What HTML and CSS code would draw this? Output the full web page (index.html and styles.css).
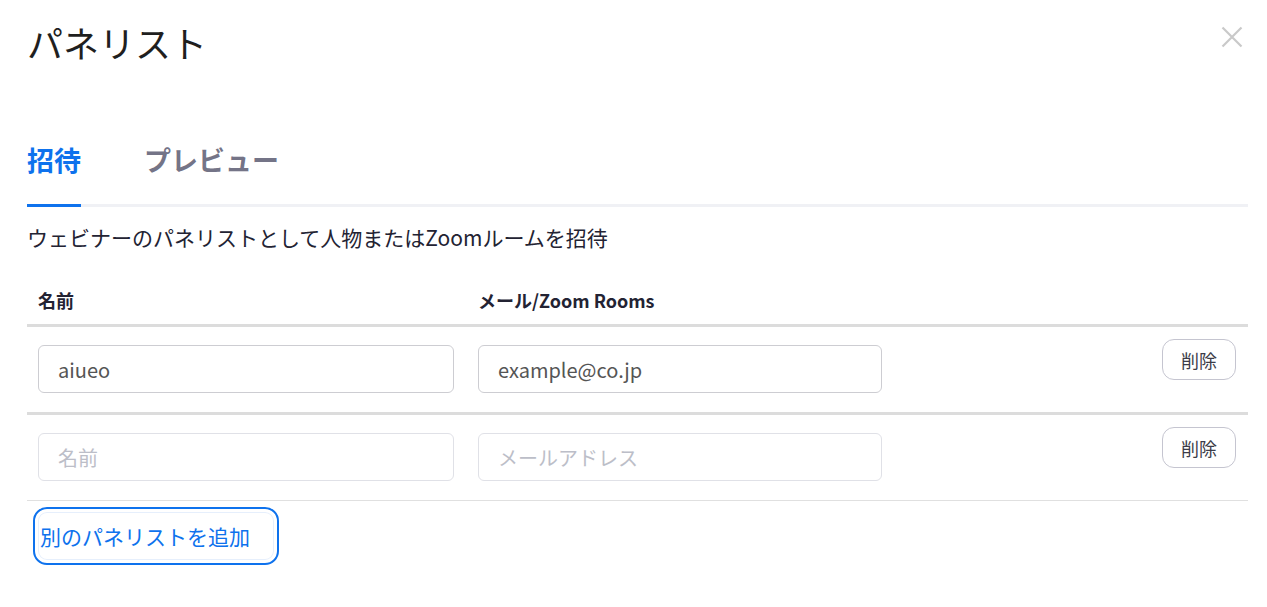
FILE: index.html
```
<!DOCTYPE html>
<html lang="ja">
<head>
<meta charset="utf-8">
<title>パネリスト</title>
<link rel="stylesheet" href="styles.css">
</head>
<body>
<div class="dialog">
  <div class="dialog-header">
    <h1 class="title">パネリスト</h1>
    <button class="close" aria-label="閉じる">
      <svg width="22" height="22" viewBox="0 0 22 22"><path d="M1.5 1.5 L20.5 20.5 M20.5 1.5 L1.5 20.5" stroke="#c9c9c9" stroke-width="2.2" stroke-linecap="butt" fill="none"/></svg>
    </button>
  </div>
  <div class="tabs">
    <div class="tab active">招待</div>
    <div class="tab">プレビュー</div>
  </div>
  <p class="desc">ウェビナーのパネリストとして人物またはZoomルームを招待</p>
  <div class="table">
    <div class="row head">
      <div class="cell">名前</div>
      <div class="cell">メール/Zoom Rooms</div>
      <div class="cell"></div>
    </div>
    <div class="row body thick">
      <div class="cell in"><input class="field name" type="text" value="aiueo" placeholder="名前"></div>
      <div class="cell in"><input class="field mail" type="text" value="example@co.jp" placeholder="メールアドレス"></div>
      <div class="cell act"><button class="del">削除</button></div>
    </div>
    <div class="row body thin">
      <div class="cell in"><input class="field name light" type="text" placeholder="名前"></div>
      <div class="cell in"><input class="field mail light" type="text" placeholder="メールアドレス"></div>
      <div class="cell act"><button class="del">削除</button></div>
    </div>
  </div>
  <button class="add">別のパネリストを追加</button>
</div>
</body>
</html>
```
FILE: styles.css
```
* { box-sizing: border-box; }
html, body { margin: 0; padding: 0; background: #fff; }
body {
  font-family: "Noto Sans CJK JP", "Noto Sans", sans-serif;
  color: #232333;
}
.dialog {
  width: 1267px;
  padding: 0 19px 0 27px;
}
.dialog-header {
  display: flex;
  justify-content: space-between;
  align-items: flex-start;
}
.title {
  margin: 21px 0 0 0;
  font-size: 36px;
  line-height: 43px;
  font-weight: 400;
  color: #1f1f1f;
}
.close {
  margin: 26px 5px 0 0;
  padding: 0;
  border: 0;
  background: none;
  width: 22px;
  height: 22px;
  display: block;
}
.close svg { display: block; }
.tabs {
  margin-top: 78px;
  display: flex;
  gap: 63px;
  border-bottom: 3px solid #f0f1f5;
}
.tab {
  font-size: 27px;
  line-height: 36px;
  font-weight: 700;
  color: #747487;
  padding-bottom: 26px;
}
.tab.active {
  color: #0e72ed;
  border-bottom: 3px solid #0e72ed;
  margin-bottom: -3px;
}
.desc {
  margin: 14px 0 0 0;
  font-size: 21px;
  line-height: 32px;
  color: #232333;
}
.table { margin-top: 27px; }
.row {
  display: grid;
  grid-template-columns: 440px 440px 1fr;
}
.cell { padding: 0 11px; }
.head {
  padding: 7px 0 11px;
  font-size: 18px;
  line-height: 26px;
  font-weight: 700;
  color: #232333;
  border-bottom: 3px solid #dcdcdc;
}
.body { height: 88px; align-items: start; }
.body.thick { border-bottom: 3px solid #dcdcdc; }
.body.thin { height: 86px; border-bottom: 1px solid #e0e0e0; }
.cell.in { padding-top: 18px; }
.cell.act {
  padding-top: 12px;
  padding-right: 12px;
  display: flex;
  justify-content: flex-end;
}
.field {
  display: block;
  height: 48px;
  border: 1px solid #cdcdd2;
  border-radius: 6px;
  padding: 0 19px;
  font-family: "Noto Sans CJK JP", "Noto Sans", sans-serif;
  font-size: 20px;
  color: #555;
  background: #fff;
  outline: none;
}
.field.light { border-color: #e0e1e7; }
.field::placeholder { color: #bcbec8; }
.field.name { width: 416px; }
.field.mail { width: 404px; }
.del {
  width: 74px;
  height: 41px;
  border: 1px solid #c5c5d0;
  border-radius: 12px;
  background: #fff;
  font-family: "Noto Sans CJK JP", "Noto Sans", sans-serif;
  font-size: 18px;
  color: #3c3c48;
  padding: 0;
}
.add {
  display: block;
  margin: 6px 0 0 6px;
  width: 246px;
  height: 58px;
  border: 2px solid #0e72ed;
  border-radius: 14px;
  background: #fff;
  box-shadow: inset 0 0 0 3px #fff, inset 0 0 0 4px #e6effc;
  padding: 0 0 0 5px;
  text-align: left;
  font-family: "Noto Sans CJK JP", "Noto Sans", sans-serif;
  font-size: 21px;
  color: #0e72ed;
}
```
